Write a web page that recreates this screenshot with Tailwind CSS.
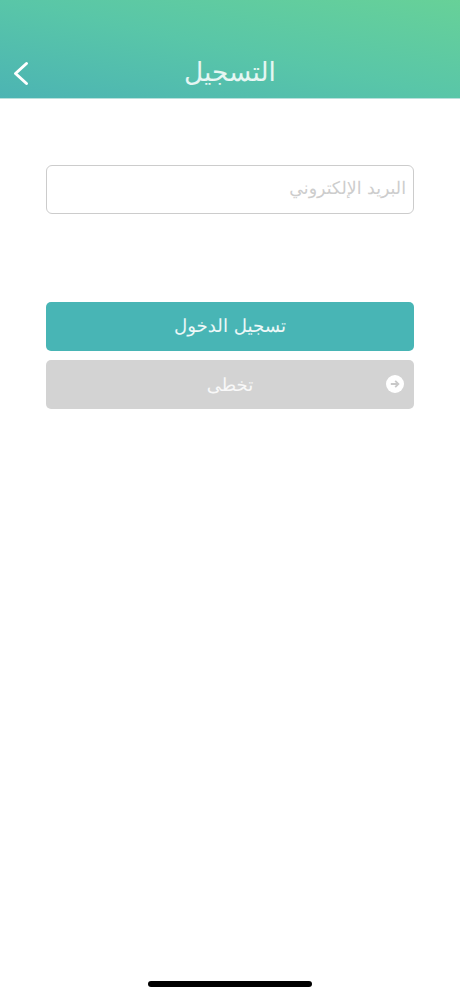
<!DOCTYPE html>
<html lang="ar" dir="rtl"><head><meta charset="utf-8"><script src="https://cdn.jsdelivr.net/npm/@tailwindcss/browser@4"></script></head>
<body class="bg-white">
<div class="relative h-[996px] w-[460px] overflow-hidden bg-white font-['DejaVu_Sans',sans-serif] [text-rendering:geometricPrecision]">
<header class="relative flex h-[99px] items-end justify-center border-b border-[#b9e0dc] bg-linear-to-tr from-[#4cb4b3] via-[#59c6a8] to-[#67d198] pb-[8px]">
<h1 class="text-[26.4px] leading-[34px] font-extralight text-white/85">التسجيل</h1>
<svg class="absolute left-[13px] top-[61px]" width="16" height="25" viewBox="0 0 16 25" fill="none"><path d="M13.5 2.5 2.5 12.5l11 10" stroke="#fff" stroke-width="3" stroke-linecap="round" stroke-linejoin="round"/></svg>
</header>
<main class="flex flex-col px-[46px] pt-[66px]">
<div class="flex h-[49px] items-center rounded-[6px] border border-[#cccccc] px-[7px] text-[17.4px] font-extralight text-[#cdcdcd]">البريد الإلكتروني</div>
<div class="mt-[88px] flex h-[49px] items-center justify-center rounded-[5px] bg-[#48b5b5] text-[18.2px] font-extralight text-white/90">تسجيل الدخول</div>
<div class="relative mt-[9px] flex h-[49px] items-center justify-center rounded-[5px] bg-[#d3d3d3] pt-[1px] text-[18px] font-extralight text-white/85">تخطى
<svg class="absolute left-[340px] top-[15px]" width="18" height="18" viewBox="0 0 18 18"><circle cx="9" cy="9" r="9" fill="#fff"/><path d="M4.8 9h7.5M9.2 5.8 12.4 9l-3.2 3.2" fill="none" stroke="#c9c9c9" stroke-width="1.8"/></svg></div>
</main>
<div class="absolute bottom-[9px] left-[148px] h-[6px] w-[164px] rounded-full bg-black"></div>
</div>
</body></html>
